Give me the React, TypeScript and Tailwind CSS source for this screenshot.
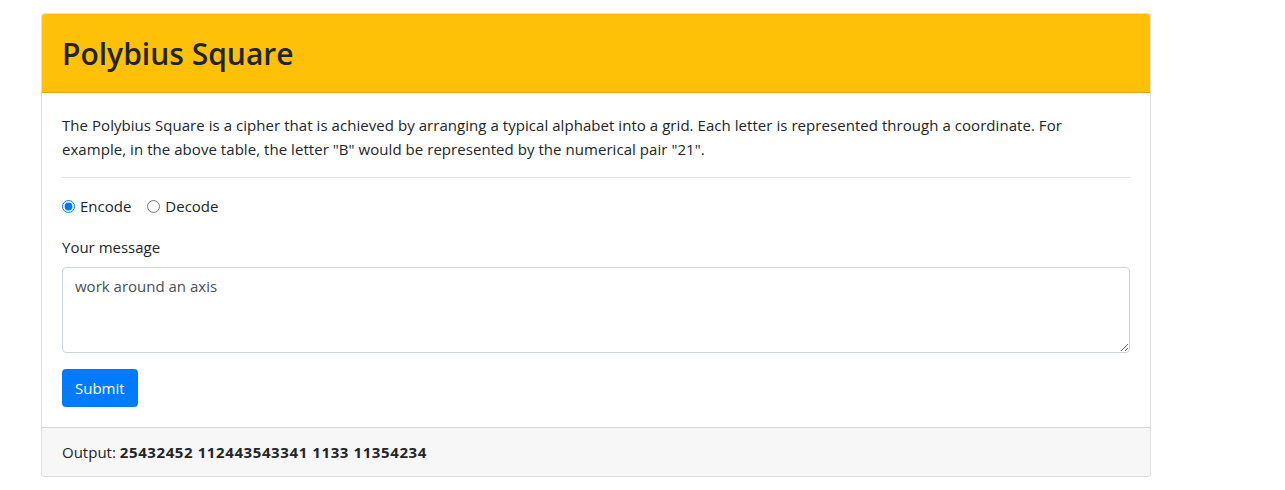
import { useState } from "react";

export default function App() {
  const [mode, setMode] = useState<"encode" | "decode">("encode");
  const [message, setMessage] = useState("work around an axis");

  return (
    <div className="min-h-screen bg-white pt-[13px] pl-[41px] font-['Open_Sans',sans-serif] text-[15px] leading-6 text-[#212529]">
      <div className="w-[1110px] overflow-hidden rounded border border-black/[.125] bg-white">
        <div className="border-b border-black/[.125] bg-[#ffc107] px-5 pt-5 pb-[18px]">
          <h1 className="text-[30px] leading-10 font-semibold">Polybius Square</h1>
        </div>

        <div className="p-5">
          <p className="mb-4 tracking-[0.05px]">
            The Polybius Square is a cipher that is achieved by arranging a typical alphabet into a grid. Each letter is
            represented through a coordinate. For example, in the above table, the letter "B" would be represented by the
            numerical pair "21".
          </p>
          <hr className="my-4 border-black/10" />

          <div className="mb-[17px] flex items-center gap-4">
            <label className="flex items-center gap-[5px]">
              <input
                type="radio"
                name="mode"
                checked={mode === "encode"}
                onChange={() => setMode("encode")}
                className="m-0 h-[13px] w-[13px]"
              />
              <span>Encode</span>
            </label>
            <label className="flex items-center gap-[5px]">
              <input
                type="radio"
                name="mode"
                checked={mode === "decode"}
                onChange={() => setMode("decode")}
                className="m-0 h-[13px] w-[13px]"
              />
              <span>Decode</span>
            </label>
          </div>

          <div className="mb-4">
            <label className="mb-2 block">Your message</label>
            <textarea
              rows={3}
              value={message}
              onChange={(e) => setMessage(e.target.value)}
              className="block h-[86px] w-full rounded border border-[#ced4da] px-3 py-1.5 text-[#495057] outline-none"
            />
          </div>

          <button className="h-[38px] rounded bg-[#007bff] px-[13px] text-white">Submit</button>
        </div>

        <div className="border-t border-black/[.125] bg-[#f7f7f7] px-5 py-3">
          Output: <strong className="font-bold tracking-[0.6px]">25432452 112443543341 1133 11354234</strong>
        </div>
      </div>
    </div>
  );
}
